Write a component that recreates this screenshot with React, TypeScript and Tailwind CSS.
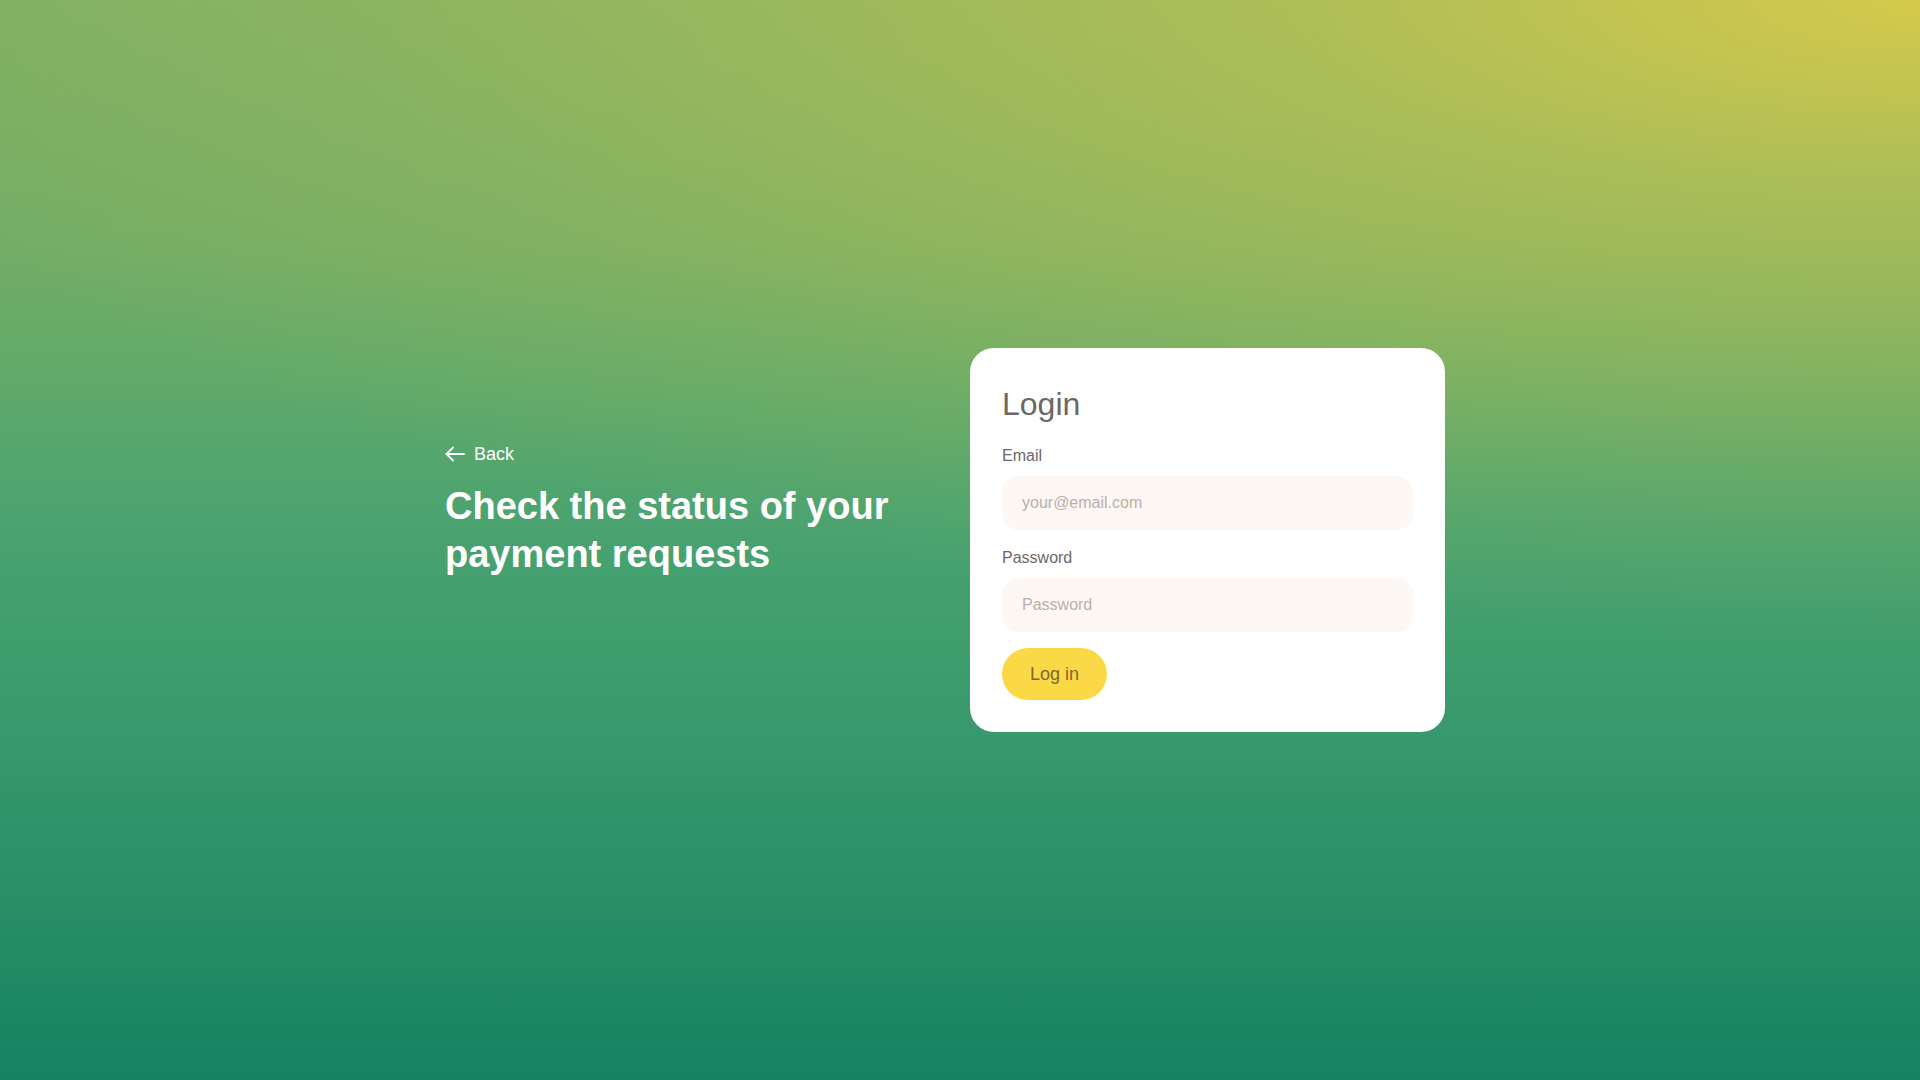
import { useState } from 'react'

function BackArrow() {
  return (
    <svg width="20" height="20" viewBox="0 0 20 20" fill="none" stroke="currentColor" strokeWidth="1.8" strokeLinecap="round" strokeLinejoin="round">
      <path d="M19 10H1.5" />
      <path d="M8 3.5 1.5 10 8 16.5" />
    </svg>
  )
}

function Field({ label, type, placeholder, value, onChange }: {
  label: string
  type: string
  placeholder: string
  value: string
  onChange: (v: string) => void
}) {
  return (
    <label className="flex flex-col">
      <span className="text-base leading-6 text-[#6d6767] mb-2">{label}</span>
      <input
        type={type}
        placeholder={placeholder}
        value={value}
        onChange={(e) => onChange(e.target.value)}
        className="h-[54px] w-full rounded-2xl bg-[#fdf8f3] px-5 text-base text-[#6d6767] placeholder:text-[#b7b0ab] outline-none"
      />
    </label>
  )
}

export default function App() {
  const [email, setEmail] = useState('')
  const [password, setPassword] = useState('')

  return (
    <div className="min-h-screen w-full flex items-center justify-center pr-[30px] font-['Liberation_Sans',Arial,sans-serif] bg-[image:radial-gradient(ellipse_2100px_640px_at_100%_0%,rgba(212,201,76,1)_0%,rgba(212,201,76,0.55)_30%,rgba(212,201,76,0.37)_50%,rgba(212,201,76,0.15)_75%,rgba(212,201,76,0)_100%),linear-gradient(to_bottom,#7eb064_0%,#73ad66_23%,#62aa6a_34%,#48a270_50%,#38996c_68%,#208964_91%,#178261_100%)]">
      <div className="flex items-center w-[1000px]">
        <div className="w-[525px] pb-[62px] text-white">
          <a href="#" className="flex items-center gap-[9px] text-lg leading-7 w-fit">
            <BackArrow />
            <span>Back</span>
          </a>
          <h1 className="mt-[15px] text-[38px] leading-[1.25] font-bold">
            Check the status of your
            <br />
            payment requests
          </h1>
        </div>

        <div className="w-[475px] bg-white rounded-3xl p-8">
          <h2 className="text-[32px] leading-[48px] text-[#6d6767] mb-4">Login</h2>
          <form className="flex flex-col gap-4" onSubmit={(e) => e.preventDefault()}>
            <Field label="Email" type="email" placeholder="your@email.com" value={email} onChange={setEmail} />
            <Field label="Password" type="password" placeholder="Password" value={password} onChange={setPassword} />
            <div>
              <button
                type="submit"
                className="h-[52px] px-7 rounded-full bg-[#fbd946] text-lg text-[#7b6933]"
              >
                Log in
              </button>
            </div>
          </form>
        </div>
      </div>
    </div>
  )
}
